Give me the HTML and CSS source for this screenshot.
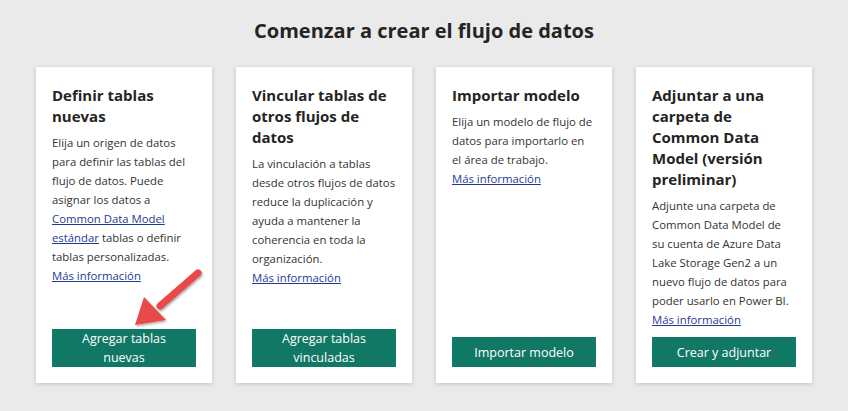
FILE: index.html
```html
<!DOCTYPE html>
<html lang="es">
<head>
<meta charset="utf-8">
<link rel="stylesheet" href="styles.css">
</head>
<body>
<main class="page">
  <h1 class="heading">Comenzar a crear el flujo de datos</h1>
  <div class="cards">
    <section class="card">
      <h2 class="card-title">Definir tablas nuevas</h2>
      <p class="card-text">Elija un origen de datos para definir las tablas del flujo de datos. Puede asignar los datos a <a href="#">Common Data Model estándar</a> tablas o definir tablas personalizadas.<br><a href="#">Más información</a></p>
      <button class="btn">Agregar tablas nuevas</button>
    </section>
    <section class="card">
      <h2 class="card-title">Vincular tablas de otros flujos de datos</h2>
      <p class="card-text">La vinculación a tablas desde otros flujos de datos reduce la duplicación y ayuda a mantener la coherencia en toda la organización.<br><a href="#">Más información</a></p>
      <button class="btn">Agregar tablas vinculadas</button>
    </section>
    <section class="card">
      <h2 class="card-title">Importar modelo</h2>
      <p class="card-text">Elija un modelo de flujo de datos para importarlo en el área de trabajo.<br><a href="#">Más información</a></p>
      <button class="btn">Importar modelo</button>
    </section>
    <section class="card">
      <h2 class="card-title">Adjuntar a una carpeta de Common Data Model (versión preliminar)</h2>
      <p class="card-text">Adjunte una carpeta de Common Data Model de su cuenta de Azure Data Lake Storage Gen2 a un nuevo flujo de datos para poder usarlo en Power BI.<br><a href="#">Más información</a></p>
      <button class="btn">Crear y adjuntar</button>
    </section>
  </div>
  <svg class="arrow" width="90" height="80" viewBox="0 0 90 80">
    <defs>
      <filter id="sh" x="-20%" y="-20%" width="150%" height="150%">
        <feDropShadow dx="1" dy="1.5" stdDeviation="1.2" flood-color="#000" flood-opacity="0.35"/>
      </filter>
    </defs>
    <g filter="url(#sh)" fill="#e8484a">
      <line x1="78" y1="13" x2="40" y2="46" stroke="#e8484a" stroke-width="7" stroke-linecap="round"/>
      <polygon points="15,65 24,37 46,60"/>
    </g>
  </svg>
</main>
</body>
</html>
```

FILE: styles.css
```css
html, body {
  margin: 0;
  padding: 0;
  background: #eaeaea;
}
body {
  font-family: "Open Sans", "Noto Sans", "Liberation Sans", sans-serif;
  color: #252423;
}
.page {
  position: relative;
  width: 848px;
  height: 411px;
  box-sizing: border-box;
  padding-top: 16px;
}
.heading {
  margin: 0;
  text-align: center;
  font-size: 20px;
  line-height: 30px;
  font-weight: 700;
  color: #252423;
}
.cards {
  display: flex;
  justify-content: center;
  gap: 24px;
  margin-top: 21px;
}
.card {
  width: 176px;
  height: 316px;
  box-sizing: border-box;
  background: #fff;
  padding: 16px 16px 16px 16px;
  display: flex;
  flex-direction: column;
  box-shadow: 0 1px 4px rgba(0,0,0,0.18);
}
.card-title {
  margin: 0;
  font-size: 15px;
  line-height: 21px;
  font-weight: 700;
  color: #252423;
  padding-top: 2px;
}
.card-text {
  margin: 6px 0 0 0;
  font-size: 11.35px;
  line-height: 19px;
  color: #333;
}
.card-text a {
  color: #1f3a93;
  text-decoration: underline;
}
.btn {
  margin-top: auto;
  width: 144px;
  min-height: 30px;
  border: none;
  background: #117865;
  color: #fff;
  font-family: inherit;
  font-size: 12.5px;
  line-height: 19px;
  padding: 0 12px;
  cursor: pointer;
}
.arrow {
  position: absolute;
  left: 120px;
  top: 260px;
}
```
